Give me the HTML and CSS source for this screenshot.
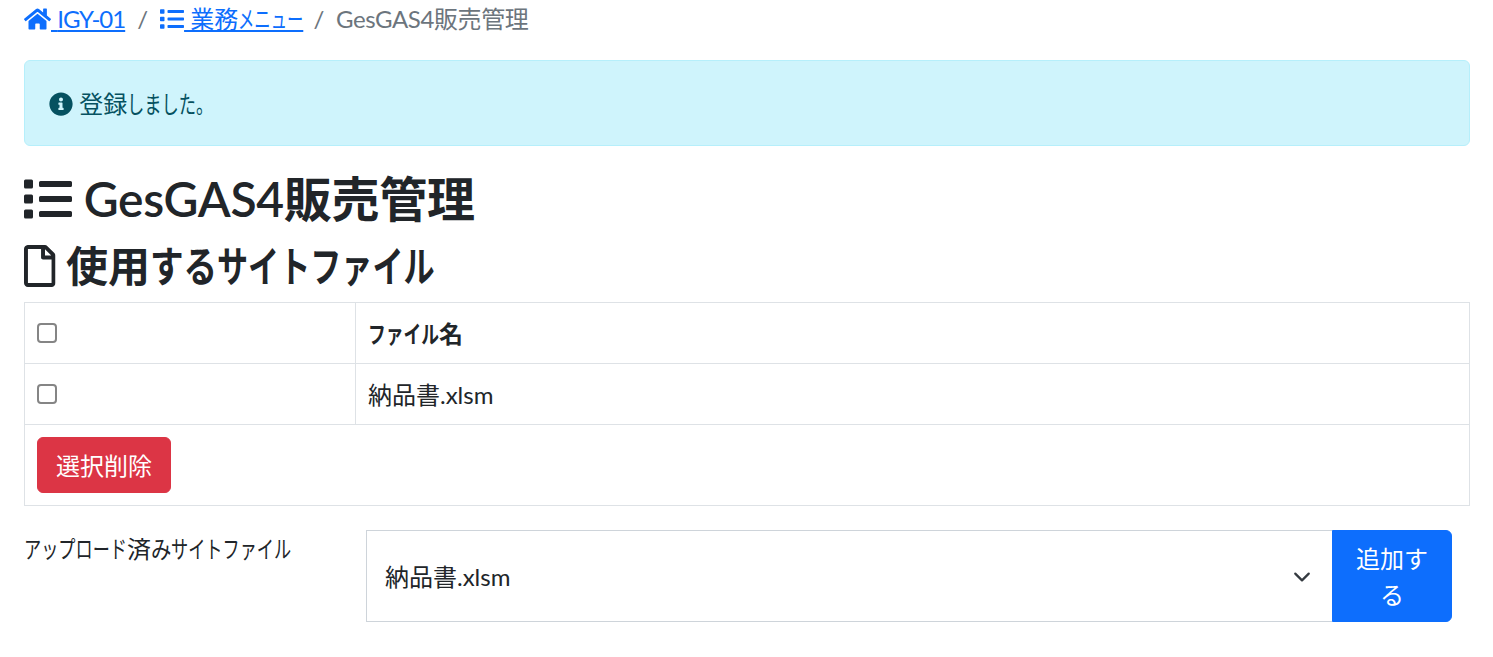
FILE: index.html
```html
<!DOCTYPE html>
<html lang="ja">
<head>
  <meta charset="utf-8">
  <title>GesGAS4販売管理</title>
  <link rel="stylesheet" href="styles.css">
</head>
<body>
  <svg class="sprite" xmlns="http://www.w3.org/2000/svg">
    <symbol id="i-home" viewBox="0 0 576 512"><path d="M280.37 148.26L96 300.11V464a16 16 0 0 0 16 16l112.06-.29a16 16 0 0 0 15.92-16V368a16 16 0 0 1 16-16h64a16 16 0 0 1 16 16v95.64a16 16 0 0 0 16 16.05L464 480a16 16 0 0 0 16-16V300L295.67 148.26a12.19 12.19 0 0 0-15.3 0zM571.6 251.47L488 182.56V44.05a12 12 0 0 0-12-12h-56a12 12 0 0 0-12 12v72.61L318.47 43a48 48 0 0 0-61 0L4.34 251.47a12 12 0 0 0-1.6 16.9l25.5 31A12 12 0 0 0 45.15 301l235.22-193.74a12.19 12.19 0 0 1 15.3 0L530.9 301a12 12 0 0 0 16.9-1.6l25.5-31a12 12 0 0 0-1.7-16.93z"/></symbol>
    <symbol id="i-list" viewBox="0 0 512 512"><path d="M80 368H16a16 16 0 0 0-16 16v64a16 16 0 0 0 16 16h64a16 16 0 0 0 16-16v-64a16 16 0 0 0-16-16zm0-320H16A16 16 0 0 0 0 64v64a16 16 0 0 0 16 16h64a16 16 0 0 0 16-16V64a16 16 0 0 0-16-16zm0 160H16a16 16 0 0 0-16 16v64a16 16 0 0 0 16 16h64a16 16 0 0 0 16-16v-64a16 16 0 0 0-16-16zm416 176H176a16 16 0 0 0-16 16v32a16 16 0 0 0 16 16h320a16 16 0 0 0 16-16v-32a16 16 0 0 0-16-16zm0-320H176a16 16 0 0 0-16 16v32a16 16 0 0 0 16 16h320a16 16 0 0 0 16-16V80a16 16 0 0 0-16-16zm0 160H176a16 16 0 0 0-16 16v32a16 16 0 0 0 16 16h320a16 16 0 0 0 16-16v-32a16 16 0 0 0-16-16z"/></symbol>
    <symbol id="i-info" viewBox="0 0 512 512"><path d="M256 8C119.043 8 8 119.083 8 256c0 136.997 111.043 248 248 248s248-111.003 248-248C504 119.083 392.957 8 256 8zm0 110c23.196 0 42 18.804 42 42s-18.804 42-42 42-42-18.804-42-42 18.804-42 42-42zm56 254c0 6.627-5.373 12-12 12h-88c-6.627 0-12-5.373-12-12v-24c0-6.627 5.373-12 12-12h12v-64h-12c-6.627 0-12-5.373-12-12v-24c0-6.627 5.373-12 12-12h64c6.627 0 12 5.373 12 12v100h12c6.627 0 12 5.373 12 12v24z"/></symbol>
    <symbol id="i-file" viewBox="0 0 384 512"><path d="M369.9 97.9L286 14C277 5 264.8-.1 252.1-.1H48C21.5 0 0 21.5 0 48v416c0 26.5 21.5 48 48 48h288c26.5 0 48-21.5 48-48V131.9c0-12.7-5.1-25-14.1-34zM332.1 128H256V51.9l76.1 76.1zM48 464V48h160v104c0 13.3 10.7 24 24 24h104v288H48z"/></symbol>
  </svg>

  <ol class="breadcrumb">
    <li><a href="#"><svg class="icon icon-home"><use href="#i-home"/></svg> <span class="latin-tight">IGY-01</span></a></li>
    <li><a href="#"><svg class="icon icon-list"><use href="#i-list"/></svg> 業務<span class="narrow n4 under">メニュー</span></a></li>
    <li class="active">GesGAS4販売管理</li>
  </ol>

  <div class="alert">
    <svg class="icon icon-list"><use href="#i-info"/></svg> 登録<span class="narrow tight n5">しました。</span>
  </div>

  <h1><svg class="icon icon-list"><use href="#i-list"/></svg> GesGAS4販売管理</h1>
  <h2><svg class="icon icon-file"><use href="#i-file"/></svg> 使用<span class="narrow n2">する</span><span class="narrow n7">サイトファイル</span></h2>

  <table class="file-table">
    <tr>
      <th class="check-col"><span class="check"></span></th>
      <th><span class="narrow n4">ファイル</span>名</th>
    </tr>
    <tr>
      <td class="check-col"><span class="check"></span></td>
      <td>納品書.xlsm</td>
    </tr>
    <tr>
      <td colspan="2"><button class="btn btn-danger">選択削除</button></td>
    </tr>
  </table>

  <div class="add-row">
    <label class="add-label"><span class="narrow n6">アップロード</span>済<span class="narrow loose n1">み</span><span class="narrow n7">サイトファイル</span></label>
    <div class="input-group">
      <div class="select">
        <span>納品書.xlsm</span>
        <svg class="chevron" viewBox="0 0 16 16"><path fill="none" stroke="#343a40" stroke-linecap="round" stroke-linejoin="round" stroke-width="2" d="M2 5l6 6 6-6"/></svg>
      </div>
      <button class="btn btn-primary">追加する</button>
    </div>
  </div>
</body>
</html>
```

FILE: styles.css
```css
* {
    box-sizing: border-box;
}
body {
    margin: 0;
    padding: 0 23px 0 24px;
    font-family: Lato, "Noto Sans CJK JP", sans-serif;
    font-size: 24px;
    line-height: 1.5;
    color: #212529;
    background: #fff;
}
.sprite {
    display: none;
}
.narrow {
    --r: 0.74;
    display: inline-block;
    margin-right: calc((var(--r) - 1) * var(--n) * 1em);
    transform: scaleX(var(--r));
    transform-origin: left center;
    white-space: nowrap;
}
.tight {
    --r: 0.72;
}
.loose {
    --r: 0.85;
}
.n1 { --n: 1; }
.n2 { --n: 2; --r: 0.8; }
.n4 { --n: 4; }
.n5 { --n: 5; }
.n6 { --n: 6; }
.n7 { --n: 7; }
.under {
    --r: 0.68;
    text-decoration: underline;
}
.add-label .n6, .add-label .n7 {
    --r: 0.715;
}
.latin-tight {
    letter-spacing: -1px;
}
.icon {
    display: inline-block;
    height: 1em;
    fill: currentColor;
    vertical-align: -0.125em;
}
.icon-home {
    width: 1.125em;
}
.icon-list {
    width: 1em;
}
.icon-file {
    width: 0.75em;
}

.breadcrumb {
    display: flex;
    margin: 0 0 23px;
    padding: 1px 0 0;
    list-style: none;
}
.breadcrumb li + li {
    padding-left: 12px;
}
.breadcrumb li + li::before {
    content: "/";
    padding-right: 12px;
    color: #6c757d;
}
.breadcrumb a {
    color: #0d6efd;
}
.breadcrumb .active {
    margin-left: -2px;
    color: #6c757d;
    letter-spacing: -0.4px;
}

.alert {
    height: 86px;
    margin-bottom: 24px;
    padding: 25px 24px 23px;
    background: #cff4fc;
    border: 1px solid #b6effb;
    border-radius: 6px;
    color: #055160;
}

h1, h2 {
    font-weight: 600;
    line-height: 1.2;
}
h1 {
    margin: 0 0 13px;
    font-size: 48px;
    letter-spacing: -0.3px;
}
h2 {
    margin: 0 0 11px;
    font-size: 42px;
}

.file-table {
    width: 100%;
    margin-bottom: 24px;
    border-collapse: collapse;
}
.file-table th, .file-table td {
    padding: 13px 12px 11px;
    border: 1px solid #dee2e6;
    text-align: left;
}
.file-table td[colspan] {
    padding: 12px;
}
.file-table th {
    font-weight: 700;
}
.check-col {
    width: 331px;
}
.check {
    display: block;
    width: 20px;
    height: 20px;
    margin-top: -1px;
    border: 2px solid #858585;
    border-radius: 4px;
    background: #fff;
}

.btn {
    padding: 10px 18px 8px;
    border: 1px solid transparent;
    border-radius: 6px;
    color: #fff;
    font: inherit;
}
.btn-danger {
    display: block;
    background: #dc3545;
    border-color: #dc3545;
}
.btn-primary {
    width: 120px;
    background: #0d6efd;
    border-color: #0d6efd;
    border-radius: 0 6px 6px 0;
}

.add-row {
    display: flex;
}
.add-label {
    width: 342px;
    padding-top: 1px;
}
.input-group {
    display: flex;
    width: 1086px;
}
.select {
    display: flex;
    flex: 1;
    align-items: center;
    justify-content: space-between;
    padding: 10px 21px 8px 18px;
    background: #fff;
    border: 1px solid #ced4da;
    border-right: 0;
}
.chevron {
    width: 18px;
    height: 18px;
}
```
